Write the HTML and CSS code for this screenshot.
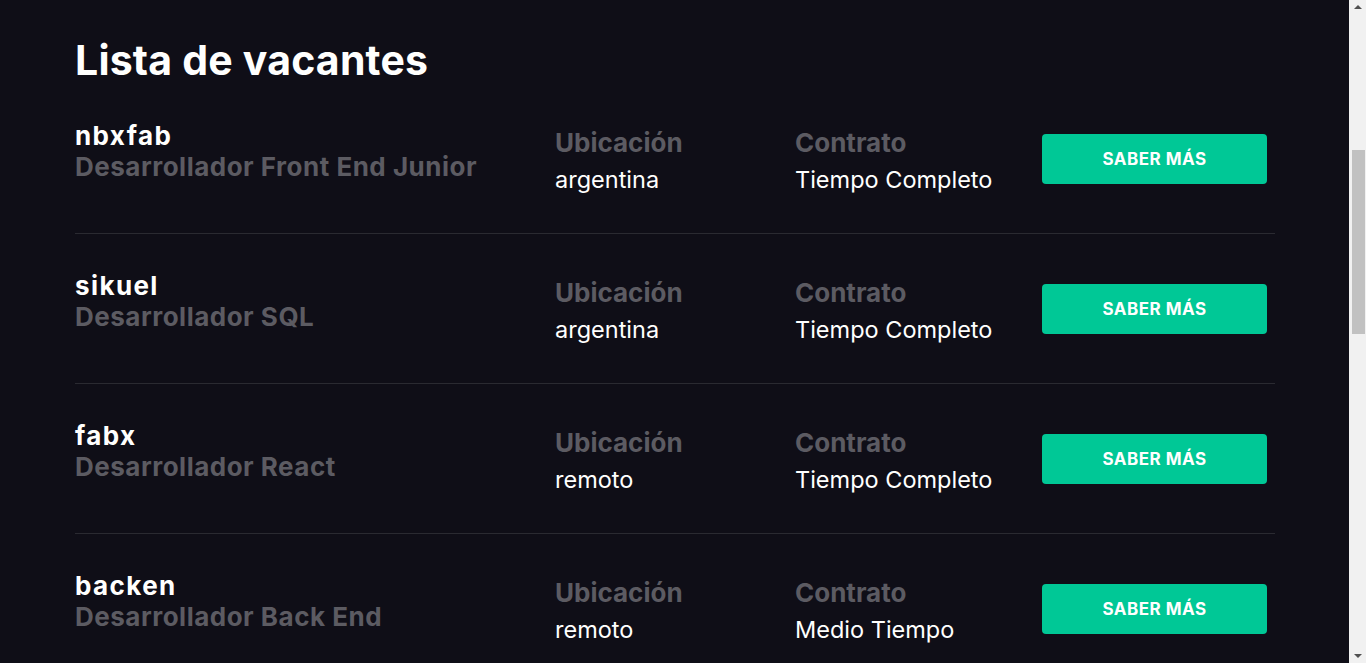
FILE: index.html
```html
<!DOCTYPE html>
<html lang="es">
<head>
<meta charset="utf-8">
<title>Lista de vacantes</title>
<link rel="stylesheet" href="styles.css">
</head>
<body>
<main class="container">
  <h1 class="title">Lista de vacantes</h1>
  <ul class="list">
    <li class="row">
      <div class="job">
        <h2 class="company">nbxfab</h2>
        <p class="role">Desarrollador Front End Junior</p>
      </div>
      <div class="info">
        <p class="label">Ubicación</p>
        <p class="value">argentina</p>
      </div>
      <div class="info">
        <p class="label">Contrato</p>
        <p class="value">Tiempo Completo</p>
      </div>
      <a class="btn" href="#">SABER MÁS</a>
    </li>
    <li class="row">
      <div class="job">
        <h2 class="company">sikuel</h2>
        <p class="role">Desarrollador SQL</p>
      </div>
      <div class="info">
        <p class="label">Ubicación</p>
        <p class="value">argentina</p>
      </div>
      <div class="info">
        <p class="label">Contrato</p>
        <p class="value">Tiempo Completo</p>
      </div>
      <a class="btn" href="#">SABER MÁS</a>
    </li>
    <li class="row">
      <div class="job">
        <h2 class="company">fabx</h2>
        <p class="role">Desarrollador React</p>
      </div>
      <div class="info">
        <p class="label">Ubicación</p>
        <p class="value">remoto</p>
      </div>
      <div class="info">
        <p class="label">Contrato</p>
        <p class="value">Tiempo Completo</p>
      </div>
      <a class="btn" href="#">SABER MÁS</a>
    </li>
    <li class="row">
      <div class="job">
        <h2 class="company">backen</h2>
        <p class="role">Desarrollador Back End</p>
      </div>
      <div class="info">
        <p class="label">Ubicación</p>
        <p class="value">remoto</p>
      </div>
      <div class="info">
        <p class="label">Contrato</p>
        <p class="value">Medio Tiempo</p>
      </div>
      <a class="btn" href="#">SABER MÁS</a>
    </li>
  </ul>
</main>
<div class="scrollbar" aria-hidden="true">
  <span class="arrow arrow-up"></span>
  <span class="thumb"></span>
  <span class="arrow arrow-down"></span>
</div>
</body>
</html>
```
FILE: styles.css
```css
* { box-sizing: border-box; }
html, body {
  margin: 0;
  padding: 0;
  background: #0f0e17;
}
body {
  font-family: Inter, "Liberation Sans", sans-serif;
  color: #fffffe;
}
.container {
  width: 1200px;
  margin-left: 75px;
  padding-top: 36px;
}
.title {
  margin: 0;
  font-size: 41px;
  line-height: 48px;
  font-weight: 700;
  letter-spacing: 0.2px;
}
.list {
  list-style: none;
  margin: 0;
  padding: 0;
}
.row {
  display: grid;
  grid-template-columns: 480px 240px 1fr 225px;
  align-items: start;
  padding: 41px 8px 36px 0;
  border-bottom: 1px solid #2a2a31;
}
.job { margin-top: -2px; }
.company {
  margin: 0;
  font-size: 26px;
  line-height: 26px;
  font-weight: 700;
  letter-spacing: 1.4px;
}
.role {
  margin: 2px 0 0;
  font-size: 26px;
  line-height: 31px;
  font-weight: 700;
  letter-spacing: 0.5px;
  color: #5c5b62;
}
.info p { margin: 0; }
.label {
  font-size: 26px;
  line-height: 35px;
  font-weight: 700;
  color: #5c5b62;
}
.info .value {
  margin-top: 2px;
  font-size: 23.5px;
  line-height: 35px;
  font-weight: 400;
}
.btn {
  display: flex;
  align-items: center;
  justify-content: center;
  height: 50px;
  margin-top: 9px;
  border-radius: 4px;
  background: #00c896;
  color: #fffffe;
  font-size: 17px;
  font-weight: 700;
  letter-spacing: 0.5px;
  text-decoration: none;
}

/* browser-like scrollbar overlay */
.scrollbar {
  position: fixed;
  top: 0;
  right: 0;
  width: 17px;
  height: 100%;
  background: #f1f1f1;
  display: flex;
  flex-direction: column;
  align-items: center;
}
.arrow {
  width: 0;
  height: 0;
  border-left: 4px solid transparent;
  border-right: 4px solid transparent;
}
.arrow-up {
  margin-top: 5px;
  border-bottom: 4px solid #505050;
}
.arrow-down {
  margin-top: auto;
  margin-bottom: 5px;
  border-top: 4px solid #505050;
}
.thumb {
  width: 13px;
  height: 184px;
  margin-top: 141px;
  margin-left: 2px;
  background: #c1c1c1;
}
```
